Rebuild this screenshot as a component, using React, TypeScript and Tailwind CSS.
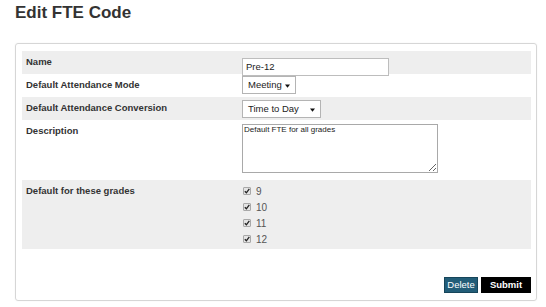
import React from "react";

const grades = ["9", "10", "11", "12"];

function FakeSelect({ label, width }: { label: string; width: string }) {
  return (
    <div
      className={`flex h-[18px] ${width} items-center justify-between border border-[#b4b4b4] bg-white pl-[5px] pr-[5px] text-[9.5px] leading-none text-[#222]`}
    >
      <span>{label}</span>
      <svg width="5" height="4" viewBox="0 0 5 4" className="mt-[1px]">
        <path d="M0 0.5 L5 0.5 L2.5 3.8 Z" fill="#111" />
      </svg>
    </div>
  );
}

function Check({ label }: { label: string }) {
  return (
    <div className="flex h-[16px] items-center gap-[5px] pl-[1px] text-[10px] font-normal text-[#555]">
      <span className="flex h-[8px] w-[8px] items-center justify-center rounded-[1px] border border-[#a8a8a8] bg-[#e4e4e4]">
        <svg width="6" height="6" viewBox="0 0 6 6">
          <path d="M0.8 3.2 L2.4 4.8 L5.3 0.9" stroke="#222" strokeWidth="1.3" fill="none" />
        </svg>
      </span>
      <span>{label}</span>
    </div>
  );
}

export default function App() {
  return (
    <div className="min-h-[307px] bg-white font-['Liberation_Sans',Arial,sans-serif] text-[#333]">
      <h1 className="pl-[15px] pt-[3px] text-[17px] font-bold leading-[20px] text-[#333]">
        Edit FTE Code
      </h1>
      <div className="ml-[15px] mt-[20px] h-[258px] w-[522px] rounded-[3px] border border-[#d6d6d6] pl-[6px] pr-[5px] pt-[7px] shadow-[0_0_2px_rgba(0,0,0,0.06)]">
        <div className="grid h-[23px] grid-cols-[220px_1fr] bg-[#eeeeee]">
          <div className="pl-[4px] pt-[5px] text-[9.5px] font-bold leading-[11px]">Name</div>
          <div className="pt-[2px]">
            <input
              defaultValue="Pre-12"
              className="h-[18px] w-[147px] border border-[#bdbdbd] bg-white px-[3px] text-[9.5px] text-[#222] outline-none"
            />
          </div>
        </div>
        <div className="grid h-[23px] grid-cols-[220px_1fr] bg-white">
          <div className="pl-[4px] pt-[5px] text-[9.5px] font-bold leading-[11px]">
            Default Attendance Mode
          </div>
          <div className="pt-[2px]">
            <FakeSelect label="Meeting" width="w-[54px]" />
          </div>
        </div>
        <div className="grid h-[23px] grid-cols-[220px_1fr] bg-[#eeeeee]">
          <div className="pl-[4px] pt-[5px] text-[9.5px] font-bold leading-[11px]">
            Default Attendance Conversion
          </div>
          <div className="pt-[3px]">
            <FakeSelect label="Time to Day" width="w-[79px]" />
          </div>
        </div>
        <div className="grid h-[60px] grid-cols-[220px_1fr] bg-white">
          <div className="pl-[4px] pt-[5px] text-[9.5px] font-bold leading-[11px]">Description</div>
          <div className="pt-[4px]">
            <textarea
              defaultValue="Default FTE for all grades"
              className="block h-[49px] w-[196px] border border-[#a9a9a9] bg-white px-[1px] py-0 text-[8px] leading-[10px] text-[#222] outline-none"
            />
          </div>
        </div>
        <div className="grid h-[69px] grid-cols-[220px_1fr] bg-[#eeeeee]">
          <div className="pl-[4px] pt-[5px] text-[9.5px] font-bold leading-[11px]">
            Default for these grades
          </div>
          <div className="pt-[3px]">
            {grades.map((g) => (
              <Check key={g} label={g} />
            ))}
          </div>
        </div>
        <div className="mt-[28px] flex justify-end gap-[3px]">
          <button className="h-[16px] w-[34px] border border-[#16455a] bg-[#225d78] text-[9.5px] leading-none text-white">
            Delete
          </button>
          <button className="h-[16px] w-[50px] bg-black text-[9.5px] font-bold leading-none text-white">
            Submit
          </button>
        </div>
      </div>
    </div>
  );
}
